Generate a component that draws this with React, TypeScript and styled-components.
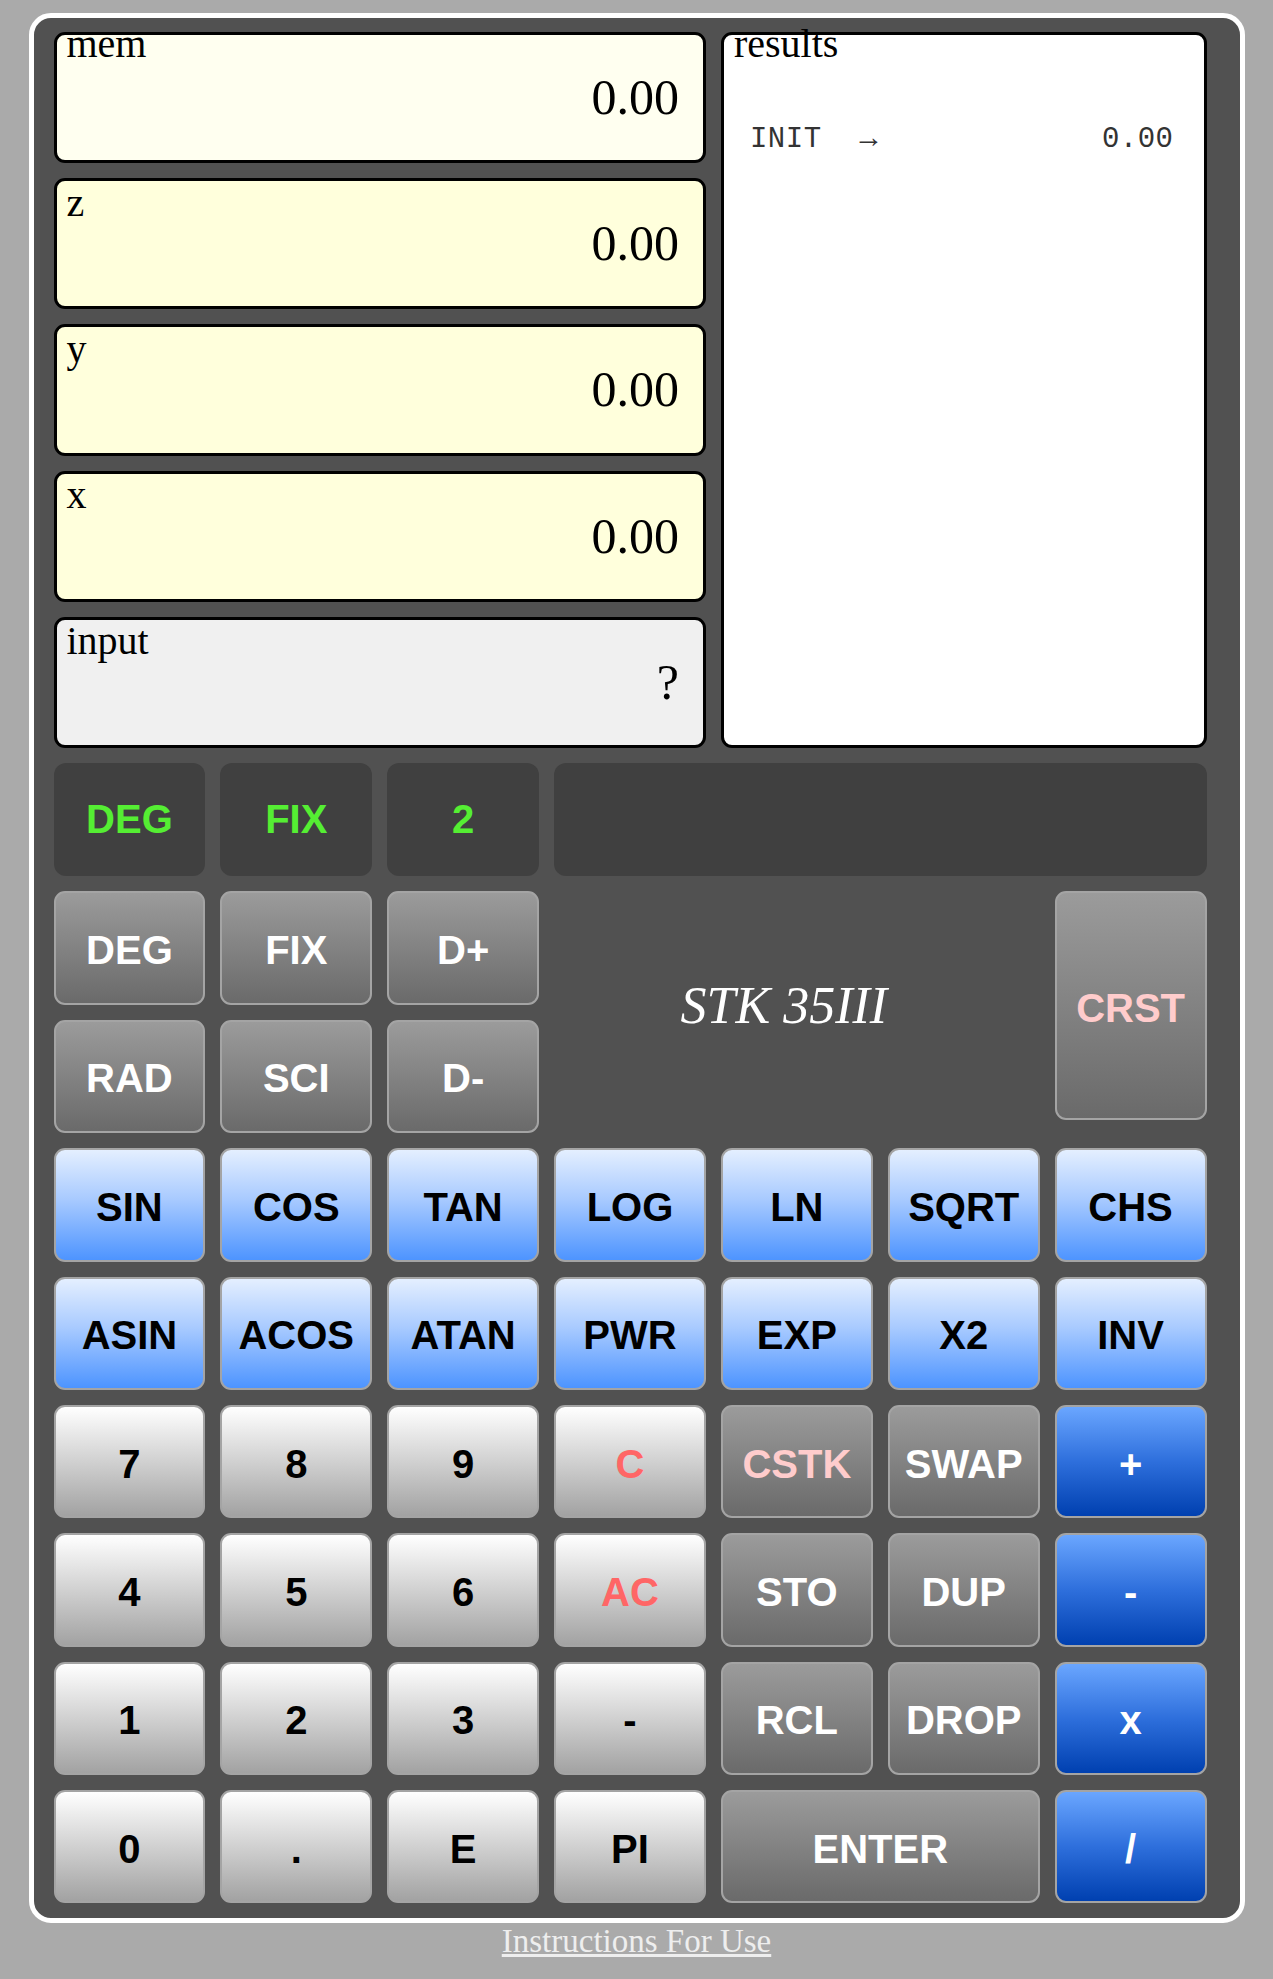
import React from 'react';
import styled, { createGlobalStyle, css } from 'styled-components';

const GlobalStyle = createGlobalStyle`
  html, body { background: #aaaaaa; }
  body {
    margin: 8px;
    font-family: "Liberation Serif", "Times New Roman", serif;
  }
  * { box-sizing: content-box; }
`;

const Calculator = styled.div`
  width: 1153px;
  margin: 5px auto 0;
  padding: 14px 33px 15px 20px;
  background: #515151;
  border: 5px solid #ffffff;
  border-radius: 22px;
`;

const DisplayArea = styled.div`
  display: grid;
  grid-template-columns: repeat(7, 1fr);
  grid-template-rows: repeat(5, 131.2px);
  gap: 15px;
`;

const Register = styled.div<{ $bg: string }>`
  grid-column: 1 / span 4;
  box-sizing: border-box;
  background: ${(p) => p.$bg};
  border: 3px solid #000000;
  border-radius: 11px;
  padding: 0 24px 0 10px;
  display: flex;
  flex-direction: column;
  color: #000000;
`;

const RegisterLabel = styled.div<{ $offset: number }>`
  font-size: 40px;
  line-height: 40px;
  height: 40px;
  margin-top: ${(p) => p.$offset}px;
  margin-bottom: ${(p) => -p.$offset}px;
  white-space: nowrap;
`;

const RegisterValue = styled.div`
  font-size: 50px;
  line-height: 50px;
  text-align: right;
  margin-top: -2.9px;
`;

const Results = styled.div`
  grid-column: 5 / span 3;
  grid-row: 1 / span 5;
  box-sizing: border-box;
  background: #ffffff;
  border: 3px solid #000000;
  border-radius: 11px;
  padding: 0 30px 0 10px;
  display: flex;
  flex-direction: column;
  color: #000000;
`;

const ResultList = styled.div`
  margin-top: 47.8px;
  padding-left: 16px;
  display: flex;
  flex-direction: column;
`;

const ResultLine = styled.div`
  display: flex;
  align-items: baseline;
  font-family: "Liberation Mono", "Courier New", monospace;
  font-size: 29px;
  line-height: 33px;
  color: #333333;
`;

const ResultName = styled.span`
  letter-spacing: 0.5px;
`;

const ResultArrow = styled.span`
  margin-left: 38px;
  font-size: 30px;
`;

const ResultValue = styled.span`
  margin-left: auto;
  letter-spacing: 0.5px;
`;

const Keypad = styled.div`
  display: grid;
  grid-template-columns: repeat(7, 1fr);
  grid-auto-rows: 113.4px;
  gap: 15px;
  margin-top: 15px;
`;

const StatusCell = styled.div<{ $span?: number }>`
  grid-column: span ${(p) => p.$span ?? 1};
  background: #404040;
  border-radius: 12px;
  display: flex;
  align-items: center;
  justify-content: center;
  color: #55ee33;
  font-family: "Liberation Sans", Arial, sans-serif;
  font-weight: bold;
  font-size: 40px;
`;

type Variant = 'gray' | 'blue' | 'white' | 'dark';

const variantStyles: Record<Variant, ReturnType<typeof css>> = {
  gray: css`
    background: linear-gradient(to bottom, #9b9b9b 0%, #6a6a6a 100%);
    color: #ffffff;
  `,
  blue: css`
    background: linear-gradient(to bottom, #e4efff 0%, #a8caff 45%, #4d94ff 100%);
    color: #000000;
  `,
  white: css`
    background: linear-gradient(to bottom, #ffffff 0%, #a2a2a2 100%);
    color: #000000;
  `,
  dark: css`
    background: linear-gradient(to bottom, #6aa6ff 0%, #2e6fdc 50%, #0040b0 100%);
    color: #ffffff;
  `,
};

const Key = styled.button<{
  $variant: Variant;
  $tone?: string;
  $span?: number;
  $tall?: boolean;
}>`
  grid-column: span ${(p) => p.$span ?? 1};
  ${(p) =>
    p.$tall &&
    css`
      grid-row: span 2;
      height: 229px;
      align-self: start;
    `}
  box-sizing: border-box;
  margin: 0;
  padding: 5px 0 0;
  border: 2px solid #a4a4a4;
  border-radius: 11px;
  display: flex;
  align-items: center;
  justify-content: center;
  font-family: "Liberation Sans", Arial, sans-serif;
  font-weight: bold;
  font-size: 40px;
  cursor: pointer;
  ${(p) => variantStyles[p.$variant]}
  ${(p) => p.$tone && `color: ${p.$tone};`}
`;

const Brand = styled.div`
  grid-column: span 3;
  grid-row: span 2;
  height: 229px;
  align-self: start;
  display: flex;
  align-items: center;
  justify-content: center;
  padding-right: 26px;
  box-sizing: border-box;
  color: #ffffff;
  font-family: "Liberation Serif", "Times New Roman", serif;
  font-style: italic;
  font-size: 52px;
`;

const Footer = styled.div`
  text-align: center;
`;

const FooterLink = styled.a`
  font-family: "Liberation Serif", "Times New Roman", serif;
  font-size: 33px;
  color: #eeeeee;
  text-decoration: underline;
`;

const PINK = '#ffcccc';
const RED = '#ff6666';

type KeyDef = { label: string; variant: Variant; tone?: string; span?: number };

const rowsAfterBrand: KeyDef[][] = [
  [
    { label: 'SIN', variant: 'blue' },
    { label: 'COS', variant: 'blue' },
    { label: 'TAN', variant: 'blue' },
    { label: 'LOG', variant: 'blue' },
    { label: 'LN', variant: 'blue' },
    { label: 'SQRT', variant: 'blue' },
    { label: 'CHS', variant: 'blue' },
  ],
  [
    { label: 'ASIN', variant: 'blue' },
    { label: 'ACOS', variant: 'blue' },
    { label: 'ATAN', variant: 'blue' },
    { label: 'PWR', variant: 'blue' },
    { label: 'EXP', variant: 'blue' },
    { label: 'X2', variant: 'blue' },
    { label: 'INV', variant: 'blue' },
  ],
  [
    { label: '7', variant: 'white' },
    { label: '8', variant: 'white' },
    { label: '9', variant: 'white' },
    { label: 'C', variant: 'white', tone: RED },
    { label: 'CSTK', variant: 'gray', tone: PINK },
    { label: 'SWAP', variant: 'gray' },
    { label: '+', variant: 'dark' },
  ],
  [
    { label: '4', variant: 'white' },
    { label: '5', variant: 'white' },
    { label: '6', variant: 'white' },
    { label: 'AC', variant: 'white', tone: RED },
    { label: 'STO', variant: 'gray' },
    { label: 'DUP', variant: 'gray' },
    { label: '-', variant: 'dark' },
  ],
  [
    { label: '1', variant: 'white' },
    { label: '2', variant: 'white' },
    { label: '3', variant: 'white' },
    { label: '-', variant: 'white' },
    { label: 'RCL', variant: 'gray' },
    { label: 'DROP', variant: 'gray' },
    { label: 'x', variant: 'dark' },
  ],
  [
    { label: '0', variant: 'white' },
    { label: '.', variant: 'white' },
    { label: 'E', variant: 'white' },
    { label: 'PI', variant: 'white' },
    { label: 'ENTER', variant: 'gray', span: 2 },
    { label: '/', variant: 'dark' },
  ],
];

const registers = [
  { name: 'mem', value: '0.00', bg: '#fffff0', offset: -11.5 },
  { name: 'z', value: '0.00', bg: '#ffffdc', offset: 1.5 },
  { name: 'y', value: '0.00', bg: '#ffffdc', offset: 1.5 },
  { name: 'x', value: '0.00', bg: '#ffffdc', offset: 1.5 },
  { name: 'input', value: '?', bg: '#f0f0f0', offset: 1.5 },
];

export default function App() {
  return (
    <>
      <GlobalStyle />
      <Calculator>
        <DisplayArea>
          {registers.map((r) => (
            <Register key={r.name} $bg={r.bg}>
              <RegisterLabel $offset={r.offset}>{r.name}</RegisterLabel>
              <RegisterValue>{r.value}</RegisterValue>
            </Register>
          ))}
          <Results>
            <RegisterLabel $offset={-11.5}>results</RegisterLabel>
            <ResultList>
              <ResultLine>
                <ResultName>INIT</ResultName>
                <ResultArrow>→</ResultArrow>
                <ResultValue>0.00</ResultValue>
              </ResultLine>
            </ResultList>
          </Results>
        </DisplayArea>
        <Keypad>
          <StatusCell>DEG</StatusCell>
          <StatusCell>FIX</StatusCell>
          <StatusCell>2</StatusCell>
          <StatusCell $span={4} />

          <Key $variant="gray">DEG</Key>
          <Key $variant="gray">FIX</Key>
          <Key $variant="gray">D+</Key>
          <Brand>STK 35III</Brand>
          <Key $variant="gray" $tone={PINK} $tall>
            CRST
          </Key>
          <Key $variant="gray">RAD</Key>
          <Key $variant="gray">SCI</Key>
          <Key $variant="gray">D-</Key>

          {rowsAfterBrand.map((row, ri) =>
            row.map((k, ki) => (
              <Key key={`${ri}-${ki}`} $variant={k.variant} $tone={k.tone} $span={k.span}>
                {k.label}
              </Key>
            ))
          )}
        </Keypad>
      </Calculator>
      <Footer>
        <FooterLink href="#">Instructions For Use</FooterLink>
      </Footer>
    </>
  );
}
